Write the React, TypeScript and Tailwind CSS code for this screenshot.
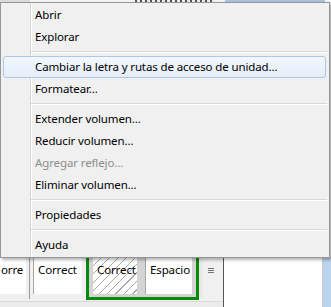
const font = "font-['Noto_Sans',sans-serif]";

type Entry = { label?: string; sep?: boolean; hot?: boolean; off?: boolean };

const entries: Entry[] = [
  { label: "Abrir" },
  { label: "Explorar" },
  { sep: true },
  { label: "Cambiar la letra y rutas de acceso de unidad...", hot: true },
  { label: "Formatear..." },
  { sep: true },
  { label: "Extender volumen..." },
  { label: "Reducir volumen..." },
  { label: "Agregar reflejo...", off: true },
  { label: "Eliminar volumen..." },
  { sep: true },
  { label: "Propiedades" },
  { sep: true },
  { label: "Ayuda" },
];

function MenuItem({ e }: { e: Entry }) {
  if (e.sep) {
    return (
      <div className="h-[8px] ml-[28px] -mr-px pt-[3px]">
        <div className="h-px bg-[#d7d7d7]" />
        <div className="h-px bg-white" />
      </div>
    );
  }
  if (e.hot) {
    return (
      <div className="h-[22px] flex items-center pl-[31px] rounded-[3px] border border-[#a9c8ec] bg-[linear-gradient(#f3f7fd,#e4edf9)] text-black">
        {e.label}
      </div>
    );
  }
  return (
    <div className={`h-[22px] flex items-center pl-[32px] ${e.off ? "text-[#8d8d8d]" : "text-black"}`}>
      {e.label}
    </div>
  );
}

function Cursor() {
  return (
    <svg className="absolute left-[293px] top-[72px]" width="14" height="21" viewBox="0 0 14 21">
      <path d="M1.5 2.5 L1.5 17 L5 13.7 L7.6 19.5 L10 18.5 L7.5 12.8 L12 12.8 Z" fill="#9a9a9a" opacity="0.35" transform="translate(1,1)" />
      <path d="M0.5 0.5 L0.5 15.5 L4 12.2 L6.6 18 L9 17 L6.5 11.3 L11 11.3 Z" fill="white" stroke="black" strokeWidth="1" strokeLinejoin="miter" />
    </svg>
  );
}

function Cell({ text, width, hatched }: { text: string; width: string; hatched?: boolean }) {
  return (
    <div
      className={`${width} h-[36px] overflow-hidden whitespace-nowrap pt-[6px] pl-[4px] text-black ${
        hatched
          ? "bg-[repeating-linear-gradient(135deg,#ffffff_0px,#ffffff_5px,#a9a9a9_5px,#a9a9a9_6px)]"
          : "bg-white border-l border-[#a8a8a8]"
      }`}
    >
      {text}
    </div>
  );
}

export default function App() {
  return (
    <div className={`relative w-[331px] h-[307px] overflow-hidden bg-[#f0f0f0] ${font} text-[11.5px] tracking-[-0.12px] leading-none`}>
      {/* content behind, top strip */}
      <div className="h-[2px] flex">
        <div className="w-[30px] bg-[#dcdcdc]" />
        <div className="w-[105px] bg-[#f4f4f4]" />
        <div className="w-[80px] bg-[repeating-linear-gradient(90deg,#555_0px,#555_2px,#eee_2px,#eee_5px)]" />
        <div className="w-[10px] bg-[#f4f4f4]" />
        <div className="w-[100px] bg-[#a9c2e2]" />
        <div className="flex-1 bg-[#f4f4f4]" />
      </div>

      {/* context menu */}
      <div className="relative z-10 w-[330px] h-[256px] border border-[#979797] bg-[linear-gradient(to_right,#f0f0f0_29px,#d5d5d5_29px,#d5d5d5_30px,#ffffff_30px,#ffffff_31px,#f0f0f0_31px)] pt-px pb-px pl-[2px] pr-[3px] shadow-[2px_2px_3px_rgba(0,0,0,0.3)]">
        {entries.map((e, i) => (
          <MenuItem key={i} e={e} />
        ))}
      </div>

      {/* content behind, bottom */}
      <div className="h-[49px] flex">
        <div className="w-[223px] flex flex-col">
          <div className="h-[43px] flex items-start">
            <div className="w-[26px] h-[36px] bg-white overflow-hidden whitespace-nowrap pt-[6px] pl-[1px] text-black">orre</div>
            <div className="w-[3px]" />
            <div className="w-px h-[41px] bg-[#9a9a9a]" />
            <div className="w-[3px]" />
            <Cell text="Correct" width="w-[49px]" />
            <div className="w-[4px]" />
            <div className="w-[113px] h-[42px] border-[3px] border-t-0 border-[#0a8a0a] bg-[#d4d4d4] flex items-start">
              <div className="w-[4px]" />
              <Cell text="Correct" width="w-[44px]" hatched />
              <div className="w-[8px]" />
              <Cell text="Espacio" width="w-[47px]" />
            </div>
            <div className="w-[4px] h-[40px] bg-[#e8e8e8]" />
            <div className="flex-1 h-[40px] flex flex-col gap-[1px] pt-[10px] pl-[5px]">
              <div className="w-[6px] h-px bg-[#777]" />
              <div className="w-[6px] h-px bg-[#777]" />
              <div className="w-[6px] h-px bg-[#777]" />
            </div>
          </div>
          <div className="h-[6px] border-t border-[#dadada] bg-[#ececec]" />
        </div>
        <div className="w-px bg-[#555]" />
        <div className="w-[98px] bg-white" />
        <div className="w-px bg-[#c8c8c8]" />
        <div className="flex-1 bg-[#bcd3ee]" />
      </div>

      <Cursor />
    </div>
  );
}
